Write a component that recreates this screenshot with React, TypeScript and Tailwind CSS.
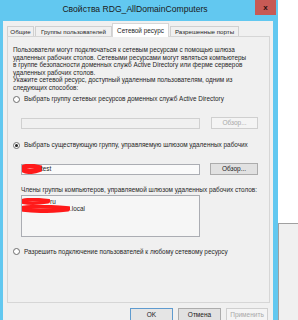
import React from "react";

function Radio({ checked = false }: { checked?: boolean }) {
  return (
    <span className="flex h-[7px] w-[7px] shrink-0 items-center justify-center rounded-full border border-[#6d6d6d] bg-white">
      {checked && <span className="h-[3px] w-[3px] rounded-full bg-[#222]" />}
    </span>
  );
}

function Scribble({ w, h }: { w: number; h: number }) {
  return (
    <svg width={w} height={h} viewBox={`0 0 ${w} ${h}`} className="shrink-0">
      <path
        d={`M1 ${h * 0.35} C ${w * 0.3} ${h * 0.1}, ${w * 0.6} ${h * 0.2}, ${w - 1} ${h * 0.4} M1 ${h * 0.6} C ${w * 0.35} ${h * 0.9}, ${w * 0.7} ${h * 0.7}, ${w - 2} ${h * 0.55}`}
        stroke="#ff1a1a"
        strokeWidth={h * 0.5}
        strokeLinecap="round"
        fill="none"
      />
    </svg>
  );
}

function Button({
  children,
  disabled = false,
  focused = false,
  className = "",
}: {
  children: React.ReactNode;
  disabled?: boolean;
  focused?: boolean;
  className?: string;
}) {
  return (
    <div
      className={`flex items-center justify-center border text-[6.5px] ${
        disabled
          ? "border-[#cfcfcf] bg-[#f4f4f4] text-[#a8a8a8]"
          : focused
          ? "border-[#5f9bcf] bg-[#e5e5e5] text-[#222]"
          : "border-[#acacac] bg-[#e1e1e1] text-[#222]"
      } ${className}`}
    >
      {children}
    </div>
  );
}

const tabs = ["Общие", "Группы пользователей", "Сетевой ресурс", "Разрешенные порты"];
const tabWidths = ["w-[27px]", "w-[77px]", "w-[57px]", "w-[69px]"];

export default function App() {
  return (
    <div
      className="flex h-[320px] w-[298px] overflow-hidden bg-white text-[#262626]"
      style={{ fontFamily: '"Liberation Sans", Arial, sans-serif' }}
    >
      <div className="flex w-[278px] shrink-0 flex-col bg-[#62c8f0] pl-[3px] pr-[5px]">
        <div className="relative flex h-[21px] shrink-0 items-center justify-center pb-[3px] text-[8.6px] text-[#1a1a1a]">
          <span className="ml-[-6px]">Свойства RDG_AllDomainComputers</span>
          <div className="absolute right-[-3px] top-0 flex h-[15px] w-[21px] items-center justify-center bg-[#c75a55] text-[8px] font-bold text-[#2a1010]">
            x
          </div>
        </div>

        <div className="flex flex-1 flex-col bg-[#f0f0f0] pl-[4px] pr-[3px] pt-[2px]">
          <div className="flex h-[13px] items-end">
            {tabs.map((t, i) =>
              i === 2 ? (
                <div
                  key={t}
                  className={`${tabWidths[i]} relative z-10 mb-[-1px] flex h-[14px] items-center justify-center border border-b-0 border-[#d6d6d6] bg-white text-[6.4px]`}
                >
                  {t}
                </div>
              ) : (
                <div
                  key={t}
                  className={`${tabWidths[i]} ml-[1px] flex h-[10px] items-center justify-center border border-b-0 border-[#d0d0d0] bg-[#f0f0f0] text-[6.2px] first:ml-0`}
                >
                  {t}
                </div>
              )
            )}
          </div>

          <div className="flex h-[267px] flex-col border border-[#d6d6d6] bg-[#f0f0f0] px-[5px] text-[6.4px] leading-[7.5px]">
            <div className="mt-[9px]">
              <p>Пользователи могут подключаться к сетевым ресурсам с помощью шлюза</p>
              <p>удаленных рабочих столов. Сетевыми ресурсами могут являться компьютеры</p>
              <p>в группе безопасности доменных служб Active Directory или ферме серверов</p>
              <p>удаленных рабочих столов.</p>
              <p>Укажите сетевой ресурс, доступный удаленным пользователям, одним из</p>
              <p>следующих способов:</p>
            </div>

            <div className="mt-[4px] flex h-[8px] items-center gap-[4px]">
              <Radio />
              <span>Выбрать группу сетевых ресурсов доменных служб Active Directory</span>
            </div>

            <div className="ml-[8px] mt-[14px] flex items-center">
              <div className="h-[11px] w-[179px] border border-[#d0d0d0] bg-[#f0f0f0]" />
              <Button disabled className="ml-[11px] h-[12px] w-[47px]">
                Обзор...
              </Button>
            </div>

            <div className="mt-[12px] flex h-[8px] items-center gap-[4px]">
              <Radio checked />
              <span>Выбрать существующую группу, управляемую шлюзом удаленных рабочих</span>
            </div>

            <div className="ml-[8px] mt-[14px] flex items-center">
              <div className="flex h-[11px] w-[179px] items-center border border-[#abadb3] bg-[#fafafa]">
                <Scribble w={20} h={10} />
                <span className="ml-[-1px]">test</span>
              </div>
              <Button className="ml-[10px] h-[12px] w-[48px]">Обзор...</Button>
            </div>

            <p className="ml-[8px] mt-[11px]">Члены группы компьютеров, управляемой шлюзом удаленных рабочих столов:</p>

            <div className="ml-[8px] mt-[1px] flex h-[42px] w-[179px] flex-col border border-[#abadb3] bg-[#f6f6f6] pt-[2px] leading-[7px]">
              <div className="flex items-center">
                <Scribble w={28} h={7} />
                <span>ru</span>
              </div>
              <div className="flex items-center">
                <Scribble w={48} h={8} />
                <span>.local</span>
              </div>
            </div>

            <div className="mt-[11px] flex h-[8px] items-center gap-[4px]">
              <Radio />
              <span>Разрешить подключение пользователей к любому сетевому ресурсу</span>
            </div>
          </div>

          <div className="mt-[5px] flex justify-end gap-[5px] pr-[2px]">
            <Button focused className="h-[13px] w-[43px]">
              OK
            </Button>
            <Button className="h-[13px] w-[43px]">Отмена</Button>
            <Button disabled className="h-[13px] w-[42px]">
              Применить
            </Button>
          </div>
        </div>
      </div>

      <div className="flex flex-1 flex-col">
        <div className="h-[223px] bg-white" />
        <div className="flex-1 border-l border-t border-[#a0a0a0] bg-[#f0f0f0]" />
      </div>
    </div>
  );
}
